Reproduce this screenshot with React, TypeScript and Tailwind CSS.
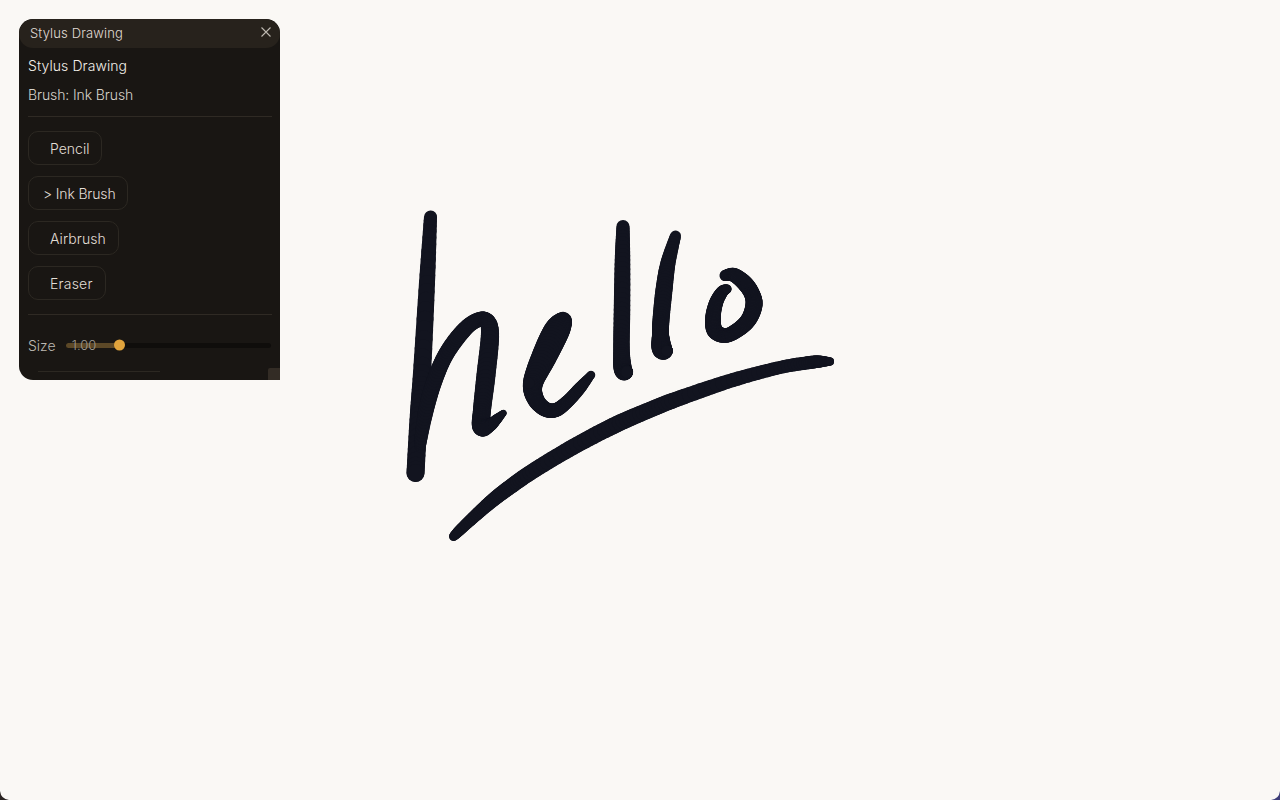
type P = [number, number, number];

function sample(pts: P[]): P[] {
  if (pts.length === 1) return pts;
  const out: P[] = [];
  const get = (i: number) => pts[Math.max(0, Math.min(pts.length - 1, i))];
  for (let i = 0; i < pts.length - 1; i++) {
    const a = get(i - 1), b = get(i), c = get(i + 1), d = get(i + 2);
    for (let s = 0; s < 10; s++) {
      const t = s / 10;
      const q = (k: 0 | 1 | 2) =>
        0.5 *
        (2 * b[k] +
          (c[k] - a[k]) * t +
          (2 * a[k] - 5 * b[k] + 4 * c[k] - d[k]) * t * t +
          (3 * b[k] - a[k] - 3 * c[k] + d[k]) * t * t * t);
      out.push([q(0), q(1), q(2)]);
    }
  }
  out.push(pts[pts.length - 1]);
  return out;
}

const strokes: P[][] = [
  // h stem
  [[430.5, 217, 13], [427, 283, 16], [422, 373, 18], [418.5, 420, 18], [415.5, 473, 18]],
  // h arch and right leg
  [[420, 445, 12], [425, 415, 15], [433, 385, 16], [444, 358, 16], [458, 337, 16], [472, 323, 15], [485, 319.5, 15], [490, 333, 18], [486, 375, 19], [482, 410, 18], [481.5, 427, 18], [490, 425, 13], [497, 419, 10], [503.5, 413, 6]],
  // e
  [[563, 321, 18], [556, 332, 26], [544, 357, 25], [533, 383, 20], [535.5, 399, 17], [545, 409, 15], [556, 410, 14], [568, 401, 13], [580, 388, 12], [591, 375, 8]],
  [[529, 383, 11]],
  // first l
  [[623, 226.5, 13], [622.5, 260, 15.5], [622, 310, 16.5], [621.5, 350, 16.5], [623, 370, 18], [627, 372, 12]],
  // second l
  [[675.5, 236, 11], [668, 263, 15], [664, 290, 17], [661, 320, 17], [660.5, 335, 17], [662, 349, 20], [667, 351, 11]],
  // o
  [[725, 275.5, 11], [734, 275, 14], [745, 283.5, 16], [752, 294, 16], [754, 305, 17], [749, 319, 16], [739, 329, 15], [726, 335.5, 14.5], [715, 331, 16], [713, 318, 15.5], [716, 303, 14], [722, 292, 12], [727, 289, 9]],
  // underline
  [[453.5, 536.5, 9], [460, 530, 11], [476, 515, 12.5], [493, 500, 14], [510, 487, 15], [533, 471, 15.5], [573, 447, 16], [613, 426, 16.5], [647, 411, 16], [680, 398, 15.5], [733, 380, 14], [780, 367.5, 13], [810, 362.5, 13], [821, 361.5, 11.5], [830, 361.5, 8]],
];

function Ink({ points }: { points: P[] }) {
  const s = sample(points);
  return (
    <g stroke="#12141f" strokeLinecap="round" fill="none">
      {s.map((p, i) => {
        const n = s[Math.min(i + 1, s.length - 1)];
        return (
          <line key={i} x1={p[0]} y1={p[1]} x2={n[0]} y2={n[1]} strokeWidth={(p[2] + n[2]) / 2} />
        );
      })}
    </g>
  );
}

function ToolButton({ label, className }: { label: string; className: string }) {
  return (
    <button
      className={`h-[34px] w-fit rounded-[10px] border border-[#2c2822] pt-[2px] whitespace-pre text-[14px] leading-none text-[#e2ded6] ${className}`}
    >
      {label}
    </button>
  );
}

export default function App() {
  return (
    <div
      className="relative h-[800px] w-[1280px] overflow-hidden bg-[#faf8f5]"
      style={{ fontFamily: "Inter, 'Noto Sans', sans-serif" }}
    >
      <svg className="absolute inset-0" width="1280" height="800" viewBox="0 0 1280 800">
        {strokes.map((s, i) => (
          <Ink key={i} points={s} />
        ))}
        <path d="M0 791Q1 799 9 800L0 800Z" fill="#2a2422" />
        <path d="M1280 791Q1279 799 1271 800L1280 800Z" fill="#3d3d78" />
      </svg>

      <section className="absolute left-[19px] top-[19px] flex h-[361px] w-[261px] flex-col overflow-hidden rounded-t-[14px] rounded-bl-[14px] bg-[#191613] font-light">
        <header className="flex h-[29px] shrink-0 items-center justify-between rounded-[14px] bg-[#27221c] pl-[11px] pr-[8px] text-[13px] tracking-[0.15px] text-[#e0dcd5]">
          <span className="pt-[1px]">Stylus Drawing</span>
          <svg width="12" height="12" viewBox="0 0 12 12" className="-mt-[3px]" stroke="#bdb8b0" strokeWidth="1.1">
            <path d="M1.5 1.5 10.5 10.5M10.5 1.5 1.5 10.5" />
          </svg>
        </header>

        <div className="flex flex-col px-[9px]">
          <div className="mt-[9px] text-[14px] leading-[17px] tracking-[0.08px] text-[#f2efe9]">Stylus Drawing</div>
          <div className="mt-[12px] text-[14px] leading-[17px] tracking-[-0.1px] text-[#d6d2cb]">Brush: Ink Brush</div>
          <div className="mt-[13px] h-px w-[244px] bg-[#2f2a24]" />
          <div className="mt-[14px] flex flex-col gap-[11px]">
            <ToolButton label="Pencil" className="pl-[21px] pr-[12px]" />
            <ToolButton label="> Ink Brush" className="pl-[14px] pr-[11px] tracking-[-0.15px]" />
            <ToolButton label="Airbrush" className="pl-[21px] pr-[12px] tracking-[0.1px]" />
            <ToolButton label="Eraser" className="pl-[21px] pr-[12px] tracking-[0.2px]" />
          </div>
          <div className="mt-[14px] h-px w-[244px] bg-[#2f2a24]" />
          <div className="mt-[22px] flex h-[17px] items-center">
            <span className="w-[38px] text-[14px] text-[#bdb9b2]">Size</span>
            <div className="relative -mt-[1px] h-[5px] w-[206px] rounded-full bg-[#0f0d0b]">
              <div className="h-full w-[53px] rounded-full bg-[#5c4827]" />
              <span className="absolute left-[6px] top-1/2 -translate-y-1/2 text-[13px] leading-none text-[#a09b90]">1.00</span>
              <div className="absolute left-[48px] top-1/2 size-[11px] -translate-y-1/2 rounded-full bg-[#e0a33c]" />
            </div>
          </div>
          <div className="ml-[10px] mt-[17px] h-[30px] w-[122px] border-t border-[#2c2822]" />
        </div>

        <div className="absolute bottom-0 right-0 size-[12px] rounded-tl-[2px] bg-[#332c25]" />
      </section>
    </div>
  );
}
